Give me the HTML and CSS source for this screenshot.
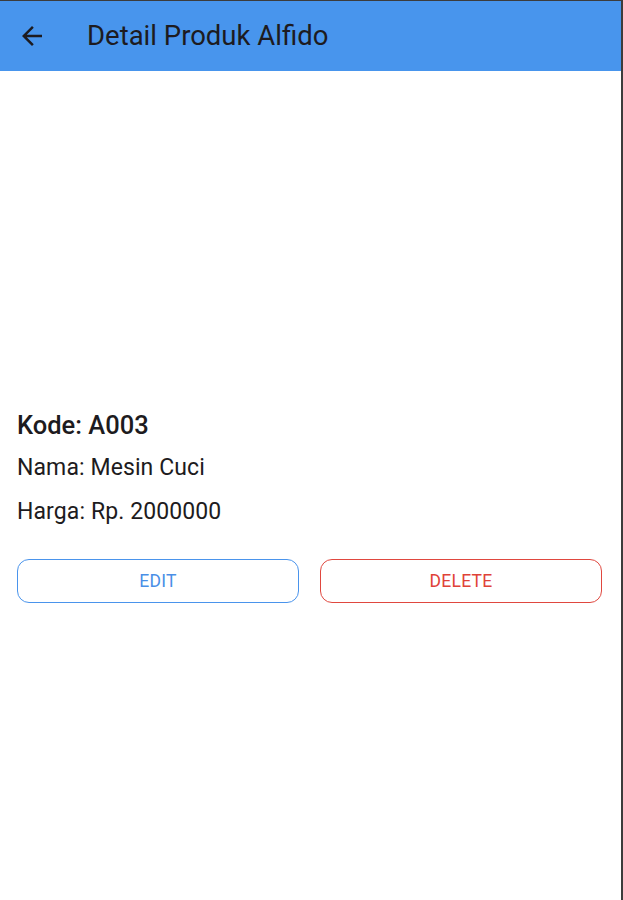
FILE: index.html
```html
<!DOCTYPE html>
<html lang="id">
<head>
<meta charset="utf-8">
<title>Detail Produk Alfido</title>
<link rel="stylesheet" href="styles.css">
</head>
<body>
<header class="appbar">
  <button class="back" aria-label="Kembali">
    <svg viewBox="0 0 24 24" width="30" height="30"><path d="M20 11H7.83l5.59-5.59L12 4l-8 8 8 8 1.41-1.41L7.83 13H20v-2z" fill="currentColor"/></svg>
  </button>
  <h1 class="title">Detail Produk Alfido</h1>
</header>
<main class="content">
  <p class="kode">Kode: A003</p>
  <p class="info nama">Nama: Mesin Cuci</p>
  <p class="info harga">Harga: Rp. 2000000</p>
  <div class="actions">
    <button class="btn btn-edit">EDIT</button>
    <button class="btn btn-delete">DELETE</button>
  </div>
</main>
</body>
</html>
```
FILE: styles.css
```css
html { background: #ffffff; }
body {
  margin: 0;
  min-height: 100vh;
  box-sizing: border-box;
  border-top: 1px solid #3c3c3c;
  border-right: 2px solid #3c3c3c;
  font-family: Roboto, "Liberation Sans", sans-serif;
  color: #1d1b20;
  background: #ffffff;
}
.appbar {
  height: 70px;
  background: #4895ed;
  display: flex;
  align-items: center;
  padding-left: 17px;
}
.back {
  border: 0;
  background: none;
  padding: 0;
  width: 30px;
  height: 30px;
  color: #1d1b20;
  display: flex;
}
.title {
  margin: 0 0 0 40px;
  font-size: 27.5px;
  font-weight: 400;
  color: #1d1b20;
  line-height: 32px;
}
.content {
  padding: 339px 19px 0 17px;
}
.kode {
  margin: 0;
  font-size: 25.5px;
  font-weight: 500;
  line-height: 30px;
}
.info {
  margin: 13px 0 0;
  font-size: 23px;
  line-height: 30px;
  letter-spacing: 0.1px;
}
.harga { margin-top: 14px; }
.actions {
  margin-top: 32px;
  display: flex;
  gap: 21px;
}
.btn {
  flex: 1;
  height: 44px;
  box-sizing: border-box;
  border-radius: 12px;
  background: #ffffff;
  font-family: Roboto, "Liberation Sans", sans-serif;
  font-size: 17.5px;
  font-weight: 400;
  letter-spacing: 0.3px;
}
.btn-edit {
  border: 1.25px solid #4a94ec;
  color: #4a8fe6;
}
.btn-delete {
  border: 1.25px solid #e0483f;
  color: #df4238;
}
```
